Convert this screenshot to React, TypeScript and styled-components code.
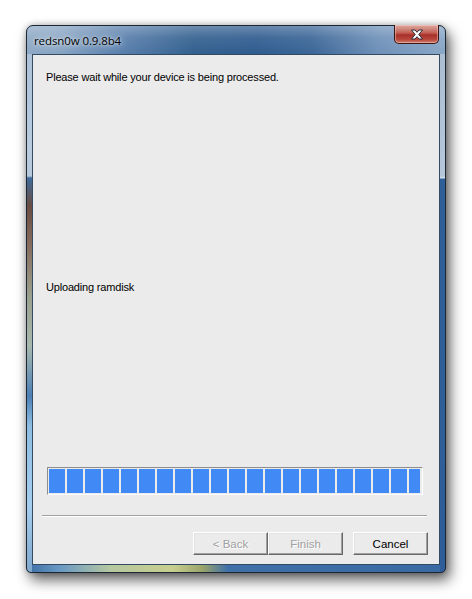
import React from "react";
import styled, { createGlobalStyle } from "styled-components";

const Global = createGlobalStyle`
  html, body { margin: 0; padding: 0; background: #ffffff; }
  body { width: 472px; height: 599px; overflow: hidden; }
  #root { padding: 25px 0 0 26px; }
`;

const Window = styled.div`
  position: relative;
  width: 420px;
  height: 548px;
  box-sizing: border-box;
  border: 1px solid #1d2733;
  border-radius: 7px 7px 5px 5px;
  box-shadow: 4px 7px 14px rgba(0, 0, 0, 0.62), 0 0 6px rgba(0, 0, 0, 0.25);
  display: flex;
  flex-direction: column;
  padding: 0 5px 7px 5px;
  background:
    linear-gradient(180deg, rgba(255,255,255,0.28) 0px, rgba(255,255,255,0.08) 12px, rgba(255,255,255,0) 28px) top / 100% 28px no-repeat,
    linear-gradient(90deg, #8ea9c6 0%, #86a3c2 8%, #5a80ad 22%, #33608f 40%, #2f5c8f 55%, #3b6697 68%, #6e90b8 84%, #89a6c6 100%) top / 100% 28px no-repeat,
    linear-gradient(180deg, #a9bfd6 0px, #b8cbdf 120px, #b5c8dc 150px, #3f6b9b 152px, #6a4c42 180px, #866d5e 220px, #9aa08e 270px, #a8b8ae 320px, #4c7fb5 370px, #8dbde3 400px, #a4cdee 480px, #7fa6cc 548px) left / 5px 100% no-repeat,
    linear-gradient(180deg, #a9bcd0 0px, #b6c7da 150px, #d9e2ec 152px, #2e5f98 153px, #2d5e99 548px) right / 5px 100% no-repeat,
    linear-gradient(90deg, #3e6ea6 0%, #6a9ac4 8%, #b6c8a0 20%, #c8cf8e 35%, #9aa46a 42%, #3f70a8 48%, #3a6aa4 100%) bottom / 100% 7px no-repeat,
    #3a67a0;
`;

const TitleBar = styled.div`
  height: 28px;
  display: flex;
  align-items: flex-start;
  justify-content: space-between;
`;

const Title = styled.span`
  font-family: "Open Sans", "Noto Sans", sans-serif;
  font-size: 11.5px;
  color: #000000;
  margin: 7px 0 0 2px;
  letter-spacing: -0.1px;
  text-shadow: 0 0 8px rgba(255, 255, 255, 0.9), 0 0 3px rgba(255, 255, 255, 0.8);
`;

const CloseButton = styled.div`
  width: 45px;
  height: 19px;
  margin-top: -1px;
  margin-right: 1px;
  box-sizing: border-box;
  border: 1px solid #3a1512;
  border-top: none;
  border-radius: 0 0 5px 5px;
  background: linear-gradient(180deg, #e0a79f 0%, #d08a80 20%, #c25c4f 45%, #a6302a 55%, #b8473c 80%, #d27d6e 100%);
  box-shadow: inset 0 0 0 1px rgba(255, 220, 210, 0.45);
  display: flex;
  align-items: center;
  justify-content: center;
`;

const Client = styled.div`
  flex: 1;
  box-sizing: border-box;
  border: 1px solid #334a63;
  background: #ebebeb;
  display: flex;
  flex-direction: column;
  color: #000;
`;

const Message = styled.div<{ $top: number }>`
  font-family: "Liberation Sans", Arial, sans-serif;
  font-size: 11px;
  line-height: 14px;
  letter-spacing: -0.18px;
  color: #000;
  padding-left: 13px;
  margin-top: ${(p) => p.$top}px;
`;

const Progress = styled.div`
  margin: 173px 0 0 14px;
  width: 376px;
  height: 28px;
  box-sizing: border-box;
  border-top: 1px solid #8d8d8d;
  border-left: 1px solid #8d8d8d;
  border-bottom: 1px solid #ffffff;
  border-right: 1px solid #ffffff;
  padding: 1px;
  display: flex;
  gap: 2px;
  background: #ebebeb;
`;

const Block = styled.div<{ $w: number }>`
  width: ${(p) => p.$w}px;
  height: 24px;
  background: #418af6;
  flex-shrink: 0;
`;

const Separator = styled.div`
  margin: 20px 0 0 9px;
  width: 385px;
  height: 1px;
  background: #a0a0a0;
  border-bottom: 1px solid #ffffff;
`;

const ButtonRow = styled.div`
  display: flex;
  justify-content: flex-end;
  margin: 15px 11px 0 0;
`;

const Button = styled.div<{ $disabled?: boolean; $gap?: number }>`
  width: 75px;
  height: 23px;
  box-sizing: border-box;
  margin-left: ${(p) => p.$gap ?? 0}px;
  border-top: 1px solid #ffffff;
  border-left: 1px solid #ffffff;
  border-right: 1px solid #696969;
  border-bottom: 1px solid #696969;
  box-shadow: inset -1px -1px 0 #a0a0a0, inset 1px 1px 0 #e3e3e3;
  background: #ebebeb;
  display: flex;
  align-items: center;
  justify-content: center;
  font-family: "Liberation Sans", Arial, sans-serif;
  font-size: 11.5px;
  color: ${(p) => (p.$disabled ? "#a0a0a0" : "#000000")};
  text-shadow: ${(p) => (p.$disabled ? "1px 1px 0 #ffffff" : "none")};
`;

const blocks = Array.from({ length: 21 }, (_, i) => (i === 20 ? 11 : 16));

export default function App() {
  return (
    <>
      <Global />
      <Window>
        <TitleBar>
          <Title>redsn0w 0.9.8b4</Title>
          <CloseButton>
            <svg width="14" height="11" viewBox="0 0 14 11">
              <path
                d="M1.5 1 H5 L7 3.3 L9 1 H12.5 L8.8 5.5 L12.5 10 H9 L7 7.7 L5 10 H1.5 L5.2 5.5 Z"
                fill="#ffffff"
                stroke="#2d2d3a"
                strokeWidth="1"
                strokeLinejoin="round"
              />
            </svg>
          </CloseButton>
        </TitleBar>
        <Client>
          <Message $top={15}>Please wait while your device is being processed.</Message>
          <Message $top={196}>Uploading ramdisk</Message>
          <Progress>
            {blocks.map((w, i) => (
              <Block key={i} $w={w} />
            ))}
          </Progress>
          <Separator />
          <ButtonRow>
            <Button $disabled>&lt; Back</Button>
            <Button $disabled>Finish</Button>
            <Button $gap={10}>Cancel</Button>
          </ButtonRow>
        </Client>
      </Window>
    </>
  );
}
